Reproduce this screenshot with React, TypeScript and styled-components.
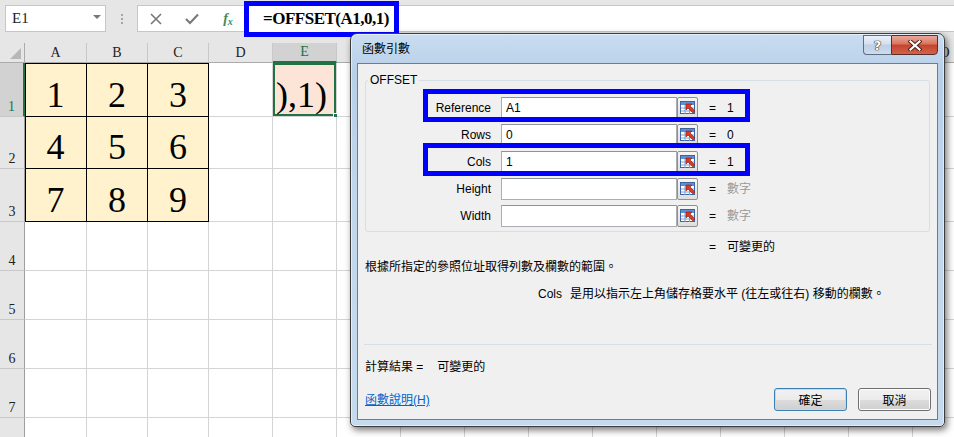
import React from 'react';
import styled, { createGlobalStyle, css } from 'styled-components';

const GlobalStyle = createGlobalStyle`
  html, body { margin: 0; padding: 0; }
  body {
    width: 954px; height: 437px; overflow: hidden; background: #fff;
    font-family: "Liberation Sans", "Noto Sans CJK TC", sans-serif;
  }
  * { box-sizing: border-box; }
`;

const Page = styled.div`
  position: relative;
  width: 954px;
  height: 437px;
  overflow: hidden;
  background: #fff;
`;

/* ---------- Formula bar ---------- */
const TopBar = styled.div`
  height: 43px;
  background: #e6e6e6;
  display: flex;
  align-items: flex-start;
  padding: 5px 0 0 5px;
`;

const NameBox = styled.div`
  width: 101px;
  height: 27px;
  background: #fff;
  border: 1px solid #c6c6c6;
  display: flex;
  align-items: center;
  justify-content: space-between;
  padding: 0 4px 0 6px;
  font-family: "Liberation Serif", serif;
  font-size: 15px;
  color: #222;
`;

const Caret = styled.span`
  width: 0;
  height: 0;
  border-left: 4px solid transparent;
  border-right: 4px solid transparent;
  border-top: 4px solid #777;
  margin-bottom: 4px;
`;

const Grip = styled.div`
  width: 31px;
  height: 27px;
  display: flex;
  flex-direction: column;
  align-items: center;
  justify-content: center;
  gap: 2px;
`;

const Dot = styled.span`
  width: 2px;
  height: 2px;
  background: #a6a6a6;
`;

const FormulaBox = styled.div`
  flex: 1;
  height: 27px;
  background: #fff;
  border: 1px solid #c6c6c6;
  border-right: none;
  display: flex;
  align-items: center;
`;

const IconSlot = styled.div`
  width: 36px;
  display: flex;
  justify-content: center;
  align-items: center;
  color: #7a7a7a;
`;

const Fx = styled.span`
  font-family: "Liberation Serif", serif;
  font-style: italic;
  font-weight: bold;
  font-size: 14px;
  color: #3f8a5a;
`;

const FxSub = styled.span`
  font-size: 10px;
  position: relative;
  top: 2px;
`;

const FormulaHighlight = styled.div`
  height: 36px;
  margin-left: -2px;
  border: 5px solid #0000ff;
  padding: 0 5px 0 14px;
  display: flex;
  align-items: center;
  background: #fff;
  font-family: "Liberation Serif", serif;
  font-weight: bold;
  font-size: 17px;
  letter-spacing: -0.5px;
  color: #000;
`;

/* ---------- Sheet ---------- */
const Sheet = styled.div`
  display: grid;
  grid-template-columns: 25px 62px 61px 61px 64px 64px repeat(10, 64px);
  grid-template-rows: 20px 54px 52px 53px 49px 49px 49px 49px 49px;
`;

const Corner = styled.div`
  background: #e6e6e6;
  border-right: 1px solid #ababab;
  border-bottom: 1px solid #ababab;
  display: flex;
  align-items: flex-end;
  justify-content: flex-end;
`;

const CornerTriangle = styled.span`
  width: 0;
  height: 0;
  border-left: 11px solid transparent;
  border-bottom: 11px solid #b7b7b7;
  margin: 0 3px 3px 0;
`;

const ColHead = styled.div<{ $selected?: boolean }>`
  background: ${(p) => (p.$selected ? '#d2d2d2' : '#e6e6e6')};
  border-right: 1px solid #c8c8c8;
  border-bottom: ${(p) => (p.$selected ? '2px solid #217346' : '1px solid #ababab')};
  display: flex;
  align-items: center;
  justify-content: center;
  font-family: "Liberation Serif", serif;
  font-size: 14px;
  color: ${(p) => (p.$selected ? '#217346' : '#222')};
`;

const RowHead = styled.div<{ $selected?: boolean }>`
  background: ${(p) => (p.$selected ? '#d2d2d2' : '#e6e6e6')};
  border-right: ${(p) => (p.$selected ? '2px solid #217346' : '1px solid #9e9e9e')};
  border-bottom: 1px solid #c8c8c8;
  display: flex;
  align-items: flex-end;
  justify-content: center;
  padding-bottom: 2px;
  font-family: "Liberation Serif", serif;
  font-size: 14px;
  line-height: 14px;
  color: ${(p) => (p.$selected ? '#217346' : '#222')};
`;

const Cell = styled.div<{ $data?: boolean; $top?: boolean; $left?: boolean; $active?: boolean }>`
  position: relative;
  background: #fff;
  border-right: 1px solid #d4d4d4;
  border-bottom: 1px solid #d4d4d4;
  display: flex;
  align-items: flex-end;
  justify-content: center;
  padding-bottom: 1px;
  font-family: "Liberation Serif", serif;
  font-size: 36px;
  line-height: 40px;
  color: #000;
  ${(p) =>
    p.$data &&
    css`
      background: #fff2cc;
      border-right-color: #000;
      border-bottom-color: #000;
    `}
  ${(p) =>
    (p.$top || p.$left) &&
    css`
      box-shadow: ${[p.$top ? 'inset 0 1px 0 #000' : '', p.$left ? 'inset 1px 0 0 #000' : '']
        .filter(Boolean)
        .join(', ')};
    `}
  ${(p) =>
    p.$active &&
    css`
      background: #fce4d6;
      justify-content: flex-start;
      padding-left: 3px;
      box-shadow: inset 0 0 0 2px #217346;
    `}
`;

const FillHandle = styled.span`
  position: absolute;
  right: -3px;
  bottom: -3px;
  width: 6px;
  height: 6px;
  background: #217346;
  border: 1px solid #fff;
`;

/* ---------- Dialog ---------- */
const Dialog = styled.div`
  position: absolute;
  left: 350px;
  top: 33px;
  width: 595px;
  height: 394px;
  display: flex;
  flex-direction: column;
  padding: 0 6px 6px 6px;
  border: 1px solid #3c3c3c;
  border-radius: 7px 7px 5px 5px;
  background: linear-gradient(to bottom, #c9ddf0 0%, #b7cfe8 10%, #c0d6ec 40%, #c6daee 100%);
  box-shadow: 2px 3px 7px rgba(0, 0, 0, 0.55), inset 0 0 0 1px rgba(255, 255, 255, 0.55);
`;

const TitleBar = styled.div`
  height: 29px;
  display: flex;
  align-items: flex-start;
  justify-content: space-between;
`;

const Title = styled.div`
  margin: 7px 0 0 5px;
  font-size: 12px;
  line-height: 16px;
  color: #000;
`;

const CaptionButtons = styled.div`
  display: flex;
  margin-top: 1px;
`;

const HelpButton = styled.div`
  width: 28px;
  height: 20px;
  border: 1px solid #5d6e83;
  border-right: none;
  border-radius: 0 0 0 4px;
  background: linear-gradient(to bottom, #eaf1f9 0%, #d3e0ef 45%, #bccfe6 50%, #cddcee 100%);
  display: flex;
  align-items: center;
  justify-content: center;
  font-family: "DejaVu Sans", sans-serif;
  font-weight: bold;
  font-size: 13px;
  color: #fff;
  text-shadow: 0 0 1px #222, 0 0 1px #222, 0 0 1px #222;
`;

const CloseButton = styled.div`
  width: 47px;
  height: 20px;
  border: 1px solid #5a2e28;
  border-radius: 0 0 4px 0;
  background: linear-gradient(to bottom, #eaa99b 0%, #d9735f 45%, #c5432d 50%, #d2624b 100%);
  display: flex;
  align-items: center;
  justify-content: center;
`;

const Client = styled.div`
  flex: 1;
  background: #f0f0f0;
  border: 1px solid #6e7c8c;
  padding: 9px 7px 0 7px;
  display: flex;
  flex-direction: column;
  font-size: 12px;
  color: #000;
`;

const GroupBox = styled.fieldset`
  margin: 0;
  min-width: 0;
  padding: 10px 0 4px 0;
  border: 1px solid #d5dfe5;
  border-radius: 3px;
`;

const Legend = styled.legend`
  margin-left: 2px;
  padding: 0 2px;
  font-size: 12px;
  line-height: 14px;
`;

const ArgList = styled.div`
  display: flex;
  flex-direction: column;
  gap: 5px;
`;

const ArgRow = styled.div`
  position: relative;
  display: grid;
  grid-template-columns: 135px 176px 21px 29px 1fr;
  height: 22px;
  align-items: center;
`;

const ArgLabel = styled.div`
  text-align: right;
  padding-right: 10px;
  line-height: 16px;
`;

const ArgInput = styled.div`
  height: 22px;
  background: #fff;
  border: 1px solid #abadb3;
  border-top-color: #8f9296;
  padding-left: 4px;
  display: flex;
  align-items: center;
  line-height: 16px;
`;

const RefButton = styled.div`
  width: 21px;
  height: 22px;
  border: 1px solid #8e8f8f;
  border-radius: 2px;
  background: linear-gradient(to bottom, #f6f6f6, #dedede);
  display: flex;
  align-items: center;
  justify-content: center;
`;

const Eq = styled.div`
  padding-left: 11px;
  line-height: 16px;
`;

const ArgValue = styled.div<{ $muted?: boolean }>`
  color: ${(p) => (p.$muted ? '#9a9a9a' : '#000')};
  line-height: 16px;
`;

const Highlight = styled.div`
  position: absolute;
  left: 57px;
  top: -8px;
  width: 327px;
  height: 33px;
  border: 5px solid #0000ff;
  pointer-events: none;
`;

const ResultLine = styled.div`
  margin-top: 7px;
  padding-left: 344px;
  display: flex;
  line-height: 16px;
`;

const ResultEq = styled.span`
  width: 18px;
`;

const Desc = styled.div`
  margin-top: 4px;
  line-height: 16px;
`;

const ArgDesc = styled.div`
  margin-top: 11px;
  padding-left: 173px;
  display: flex;
  gap: 8px;
  line-height: 16px;
`;

const Separator = styled.div`
  margin: 42px -2px 0 -1px;
  height: 1px;
  background: #d5dfe5;
`;

const CalcResult = styled.div`
  margin-top: 14px;
  display: flex;
  gap: 14px;
  line-height: 16px;
`;

const Footer = styled.div`
  margin-top: 13px;
  height: 23px;
  display: flex;
  align-items: center;
`;

const HelpLink = styled.a`
  color: #0066cc;
  text-decoration: underline;
  line-height: 16px;
  cursor: pointer;
`;

const ButtonGroup = styled.div`
  margin-left: auto;
  margin-right: -1px;
  display: flex;
  gap: 11px;
`;

const DialogButton = styled.button<{ $default?: boolean }>`
  width: 73px;
  height: 23px;
  padding: 0;
  border: 1px solid ${(p) => (p.$default ? '#3c7fb1' : '#707070')};
  border-radius: 3px;
  background: linear-gradient(to bottom, #f2f2f2 0%, #ebebeb 50%, #dddddd 51%, #cfcfcf 100%);
  box-shadow: ${(p) => (p.$default ? 'inset 0 0 0 1px #a9e4f7' : 'inset 0 0 0 1px #fcfcfc')};
  font-family: "Liberation Sans", "Noto Sans CJK TC", sans-serif;
  font-size: 12px;
  color: #000;
`;

const RefIcon = () => (
  <svg width="16" height="14" viewBox="0 0 16 14">
    <rect x="0.5" y="0.5" width="14" height="12" fill="#fff" stroke="#3e64a0" />
    <rect x="1" y="1" width="13" height="3" fill="#5d8fd6" />
    <path d="M1 7H14M1 10H14M5 4V13M9.5 4V13" stroke="#7aa0d8" strokeWidth="1" />
    <path d="M6 3 L12 3 L10 5 L15 10 L13 12 L8 7 L6 9 Z" fill="#d83a22" stroke="#8a1a0c" strokeWidth="0.6" />
  </svg>
);

const CrossIcon = () => (
  <svg width="12" height="12" viewBox="0 0 12 12">
    <path d="M1 1L11 11M11 1L1 11" stroke="#777" strokeWidth="1.6" />
  </svg>
);

const CheckIcon = () => (
  <svg width="14" height="12" viewBox="0 0 14 12">
    <path d="M1 6L5 10L13 1.5" stroke="#777" strokeWidth="2" fill="none" />
  </svg>
);

const CloseGlyph = () => (
  <svg width="14" height="11" viewBox="0 0 14 11">
    <path d="M2.5 1.5L11.5 9.5M11.5 1.5L2.5 9.5" stroke="#4a1a14" strokeWidth="4" strokeLinecap="square" />
    <path d="M2.5 1.5L11.5 9.5M11.5 1.5L2.5 9.5" stroke="#fff" strokeWidth="2.2" strokeLinecap="square" />
  </svg>
);

const columns = ['A', 'B', 'C', 'D', 'E', 'F', 'G', 'H', 'I', 'J', 'K', 'L', 'M', 'N', 'O'];
const data: (number | null)[][] = [
  [1, 2, 3],
  [4, 5, 6],
  [7, 8, 9],
];

type Arg = { name: string; value: string; result: string; muted?: boolean; highlight?: boolean };
const args: Arg[] = [
  { name: 'Reference', value: 'A1', result: '1', highlight: true },
  { name: 'Rows', value: '0', result: '0' },
  { name: 'Cols', value: '1', result: '1', highlight: true },
  { name: 'Height', value: '', result: '數字', muted: true },
  { name: 'Width', value: '', result: '數字', muted: true },
];

export default function App() {
  const rows = [1, 2, 3, 4, 5, 6, 7, 8];
  return (
    <Page>
      <GlobalStyle />
      <TopBar>
        <NameBox>
          E1
          <Caret />
        </NameBox>
        <Grip>
          <Dot />
          <Dot />
          <Dot />
        </Grip>
        <FormulaBox>
          <IconSlot>
            <CrossIcon />
          </IconSlot>
          <IconSlot>
            <CheckIcon />
          </IconSlot>
          <IconSlot>
            <Fx>
              f<FxSub>x</FxSub>
            </Fx>
          </IconSlot>
          <FormulaHighlight>=OFFSET(A1,0,1)</FormulaHighlight>
        </FormulaBox>
      </TopBar>

      <Sheet>
        <Corner>
          <CornerTriangle />
        </Corner>
        {columns.map((c) => (
          <ColHead key={c} $selected={c === 'E'}>
            {c}
          </ColHead>
        ))}
        {rows.map((r) => (
          <React.Fragment key={r}>
            {/* row 8's number lies below the visible area */}
            <RowHead $selected={r === 1}>{r < 8 ? r : ''}</RowHead>
            {columns.map((c, ci) => {
              const v = r <= 3 && ci < 3 ? data[r - 1][ci] : null;
              if (v !== null) {
                return (
                  <Cell key={c} $data $top={r === 1} $left={ci === 0}>
                    {v}
                  </Cell>
                );
              }
              if (r === 1 && c === 'E') {
                return (
                  <Cell key={c} $active>
                    ),1)
                    <FillHandle />
                  </Cell>
                );
              }
              return <Cell key={c} />;
            })}
          </React.Fragment>
        ))}
      </Sheet>

      <Dialog>
        <TitleBar>
          <Title>函數引數</Title>
          <CaptionButtons>
            <HelpButton>?</HelpButton>
            <CloseButton>
              <CloseGlyph />
            </CloseButton>
          </CaptionButtons>
        </TitleBar>
        <Client>
          <GroupBox>
            <Legend>OFFSET</Legend>
            <ArgList>
              {args.map((a) => (
                <ArgRow key={a.name}>
                  <ArgLabel>{a.name}</ArgLabel>
                  <ArgInput>{a.value}</ArgInput>
                  <RefButton>
                    <RefIcon />
                  </RefButton>
                  <Eq>=</Eq>
                  <ArgValue $muted={a.muted}>{a.result}</ArgValue>
                  {a.highlight && <Highlight />}
                </ArgRow>
              ))}
            </ArgList>
          </GroupBox>
          <ResultLine>
            <ResultEq>=</ResultEq>
            <span>可變更的</span>
          </ResultLine>
          <Desc>根據所指定的參照位址取得列數及欄數的範圍。</Desc>
          <ArgDesc>
            <span>Cols</span>
            <span>是用以指示左上角儲存格要水平 (往左或往右) 移動的欄數。</span>
          </ArgDesc>
          <Separator />
          <CalcResult>
            <span>計算結果 =</span>
            <span>可變更的</span>
          </CalcResult>
          <Footer>
            <HelpLink>函數說明(H)</HelpLink>
            <ButtonGroup>
              <DialogButton $default>確定</DialogButton>
              <DialogButton>取消</DialogButton>
            </ButtonGroup>
          </Footer>
        </Client>
      </Dialog>
    </Page>
  );
}
